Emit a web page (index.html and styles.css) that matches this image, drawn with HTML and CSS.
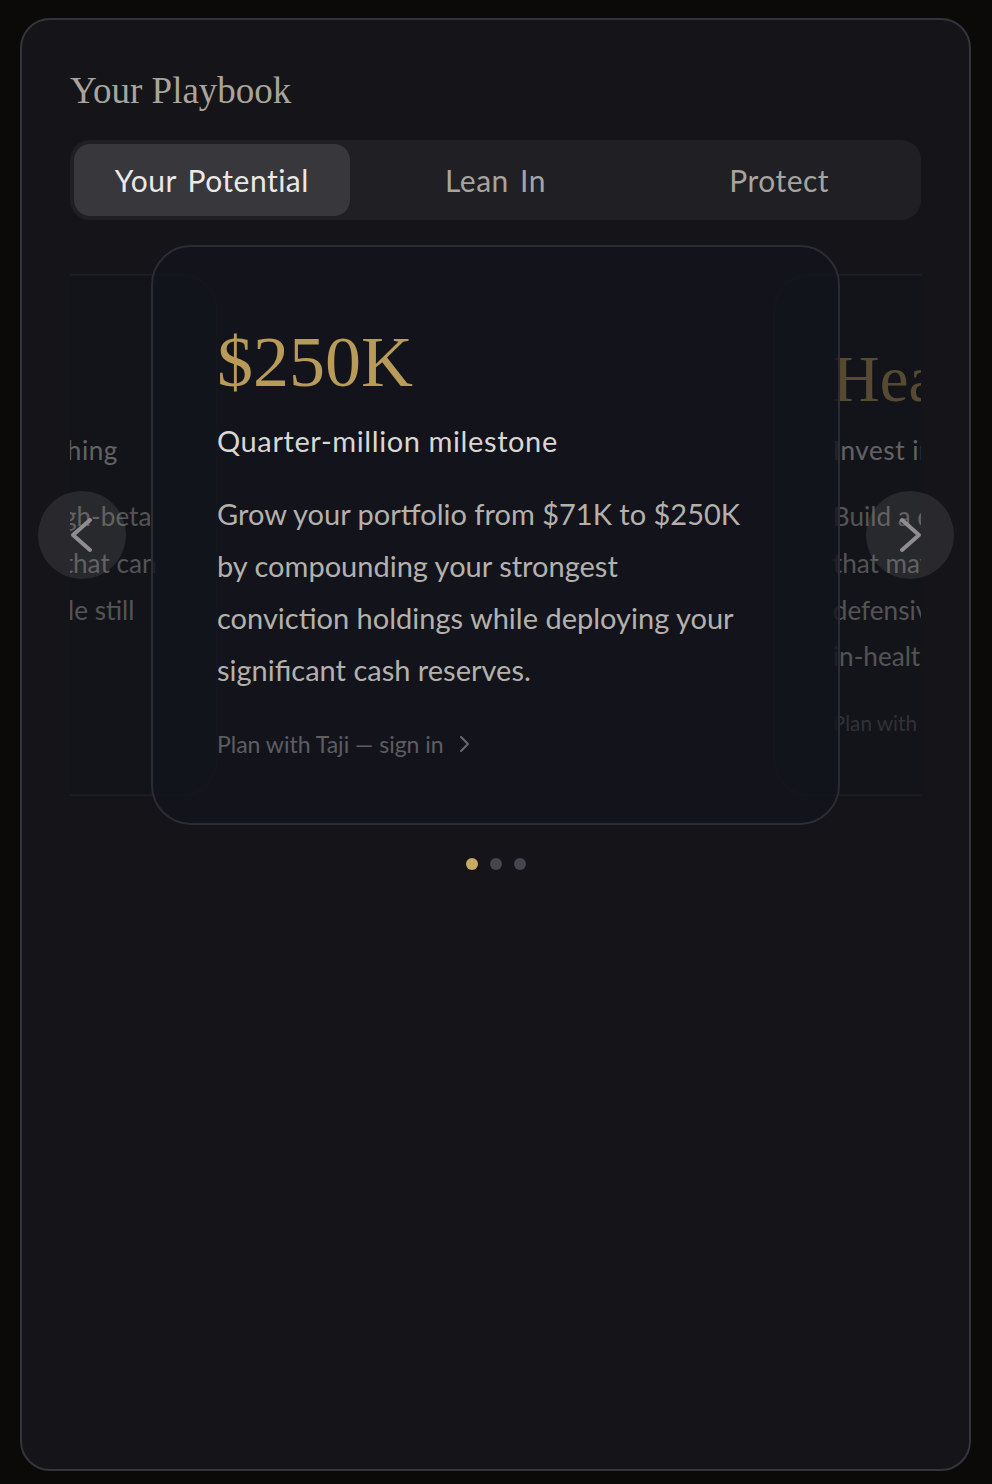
FILE: index.html
```html
<!DOCTYPE html>
<html lang="en">
<head>
<meta charset="utf-8">
<title>Your Playbook</title>
<link rel="stylesheet" href="styles.css">
</head>
<body>
<section class="panel">
  <h2 class="title">Your Playbook</h2>
  <nav class="tabs">
    <div class="tab active">Your Potential</div>
    <div class="tab">Lean In</div>
    <div class="tab">Protect</div>
  </nav>
  <div class="carousel">
    <div class="viewport">
      <div class="track">
        <article class="card side">
          <div class="amount">$100K</div>
          <div class="subtitle">Protect your wealth against everything</div>
          <div class="body">Trim the concentrated position in high-beta<br>names, and also set clear guardrails that can<br>limit drawdowns during a selloff while still<br>capturing upside.</div>
          <div class="cta">Plan with Taji — sign in
            <svg class="cta-icon" viewBox="0 0 12 18" width="12" height="18"><path d="M3 2 L10 9 L3 16"/></svg>
          </div>
        </article>
        <article class="card active">
          <div class="amount">$250K</div>
          <div class="subtitle">Quarter-million milestone</div>
          <div class="body">Grow your portfolio from $71K to $250K<br>by compounding your strongest<br>conviction holdings while deploying your<br>significant cash reserves.</div>
          <div class="cta">Plan with Taji — sign in
            <svg class="cta-icon" viewBox="0 0 12 18" width="12" height="18"><path d="M3 2 L10 9 L3 16"/></svg>
          </div>
        </article>
        <article class="card side">
          <div class="amount">Healthcare</div>
          <div class="subtitle">Invest in resilience</div>
          <div class="body">Build a defensive core of quality names<br>that may hold steady when markets swing<br>defensive sectors, dividend payers and<br>in-healthcare leaders.</div>
          <div class="cta">Plan with Taji — sign in
            <svg class="cta-icon" viewBox="0 0 12 18" width="12" height="18"><path d="M3 2 L10 9 L3 16"/></svg>
          </div>
        </article>
      </div>
    </div>
    <button class="nav prev" aria-label="Previous">
      <svg viewBox="0 0 88 88" width="88" height="88"><path d="M52 29 L35 44 L52 59"/></svg>
    </button>
    <button class="nav next" aria-label="Next">
      <svg viewBox="0 0 88 88" width="88" height="88"><path d="M36 29 L53 44 L36 59"/></svg>
    </button>
  </div>
  <div class="dots">
    <span class="dot active"></span>
    <span class="dot"></span>
    <span class="dot"></span>
  </div>
</section>
</body>
</html>
```
FILE: styles.css
```css
html, body {
  margin: 0;
  padding: 0;
}
body {
  background: #0b0a08;
  font-family: Lato, "Noto Sans", sans-serif;
  height: 1484px;
  overflow: hidden;
}
.panel {
  margin: 18px 21px 0 20px;
  height: 1453px;
  box-sizing: border-box;
  border: 2px solid #35343b;
  border-radius: 30px;
  background: #141419;
  padding: 49px 48px 0;
}
.title {
  margin: 0;
  font: 400 37px/44px "Liberation Serif", serif;
  color: #a9a49c;
}
.tabs {
  margin-top: 27px;
  display: grid;
  grid-template-columns: repeat(3, 1fr);
  gap: 8px;
  padding: 4px;
  height: 80px;
  box-sizing: border-box;
  background: #1f1f24;
  border-radius: 20px;
}
.tab {
  border-radius: 16px;
  display: flex;
  align-items: center;
  justify-content: center;
  font-size: 30px;
  color: #a7a4a0;
  letter-spacing: 0.5px;
  word-spacing: 3px;
}
.tab.active {
  background: #37373c;
  color: #ebe9e6;
}
.carousel {
  position: relative;
  margin-top: 25px;
  height: 580px;
}
.viewport {
  height: 100%;
  overflow: clip;
}
.track {
  display: flex;
  justify-content: center;
  align-items: center;
  height: 100%;
}
.card {
  flex: 0 0 689px;
  width: 689px;
  min-width: 0;
  max-width: 689px;
  height: 580px;
  box-sizing: border-box;
  border: 2px solid #2c2d34;
  border-radius: 40px;
  padding: 79px 64px 0;
  background: #13141b;
}
.card.side {
  transform: scale(0.9);
  opacity: 0.4;
}
.card.active {
  margin: 0 -101px;
  position: relative;
  z-index: 1;
  background: rgba(19, 20, 28, 0.8);
}
.amount {
  font: 400 72px/72px "Liberation Serif", serif;
  color: #b99b59;
  white-space: nowrap;
}
.subtitle {
  margin-top: 25px;
  font-size: 29px;
  line-height: 36px;
  letter-spacing: 0.6px;
  color: #d9d7d4;
  white-space: nowrap;
}
.body {
  margin-top: 29px;
  font-size: 29px;
  line-height: 52px;
  color: #b4b1ac;
  white-space: nowrap;
}
.cta {
  margin-top: 33px;
  font-size: 23px;
  line-height: 30px;
  color: #5e5d62;
  display: flex;
  align-items: center;
  gap: 14px;
  white-space: nowrap;
}
.cta-icon path {
  fill: none;
  stroke: #6a6a6e;
  stroke-width: 2;
  stroke-linecap: round;
  stroke-linejoin: round;
}
.nav {
  position: absolute;
  top: 50%;
  margin-top: -44px;
  width: 88px;
  height: 88px;
  padding: 0;
  border: 0;
  border-radius: 50%;
  background: rgba(255, 255, 255, 0.09);
  z-index: 2;
  display: block;
  cursor: pointer;
}
.nav svg {
  display: block;
}
.nav path {
  fill: none;
  stroke: #8e8e92;
  stroke-width: 4;
  stroke-linecap: round;
  stroke-linejoin: round;
}
.nav.prev {
  left: -32px;
}
.nav.next {
  right: -33px;
}
.dots {
  display: flex;
  justify-content: center;
  gap: 12px;
  margin-top: 33px;
}
.dot {
  width: 12px;
  height: 12px;
  border-radius: 50%;
  background: #46464c;
}
.dot.active {
  background: #c9aa62;
}
```
